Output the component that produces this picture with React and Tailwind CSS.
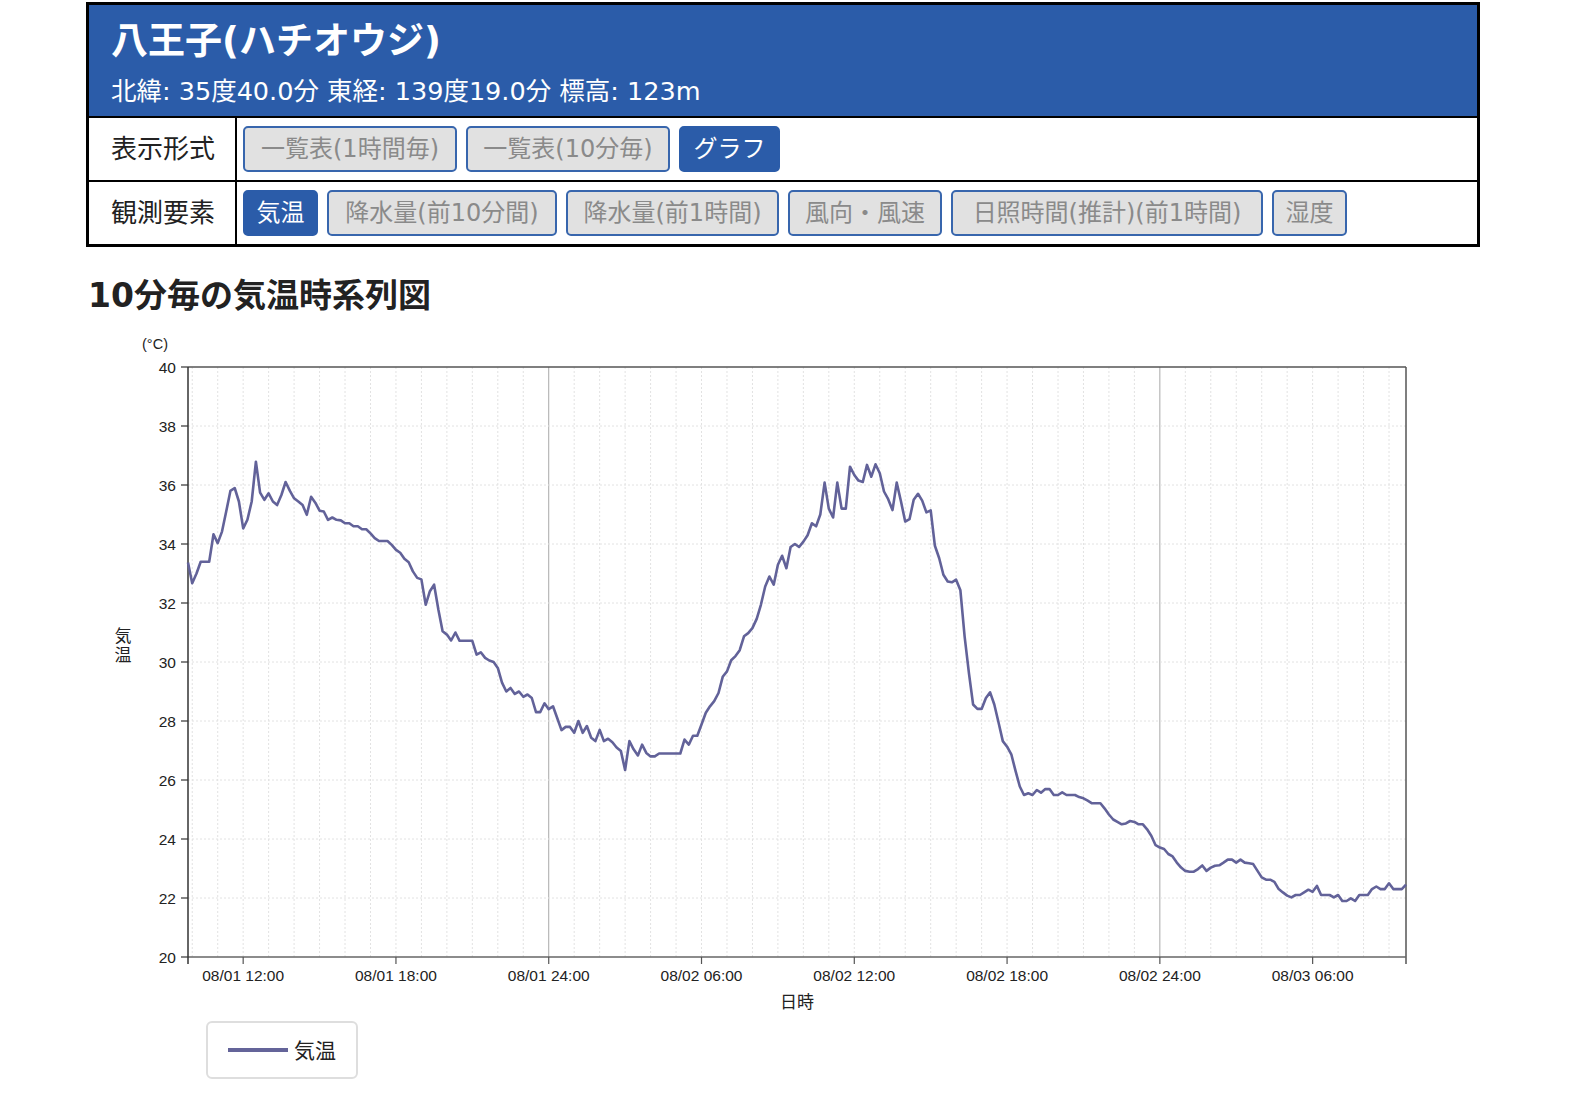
import React from "react";

// 10分毎の気温 (08/01 09:50 〜 08/03 09:40)
const temps = [
  33.37, 32.67, 33.0, 33.4, 33.4, 33.4, 34.33, 34.03, 34.42, 35.1,
  35.8, 35.9, 35.44, 34.53, 34.82, 35.44, 36.79, 35.74, 35.5, 35.72,
  35.44, 35.32, 35.66, 36.1, 35.8, 35.55, 35.44, 35.32, 34.99, 35.6,
  35.4, 35.13, 35.1, 34.82, 34.9, 34.82, 34.8, 34.7, 34.7, 34.6,
  34.6, 34.5, 34.5, 34.36, 34.2, 34.1, 34.1, 34.1, 33.97, 33.8,
  33.7, 33.5, 33.38, 33.07, 32.85, 32.8, 31.94, 32.4, 32.62, 31.77,
  31.04, 30.93, 30.73, 31.0, 30.72, 30.72, 30.72, 30.72, 30.25, 30.33,
  30.14, 30.05, 30.0, 29.8, 29.3, 29.0, 29.12, 28.92, 29.0, 28.82,
  28.9, 28.78, 28.3, 28.3, 28.6, 28.4, 28.5, 28.1, 27.69, 27.8,
  27.8, 27.6, 28.0, 27.6, 27.83, 27.43, 27.32, 27.7, 27.32, 27.4,
  27.28, 27.1, 26.98, 26.34, 27.32, 27.04, 26.83, 27.2, 26.92, 26.8,
  26.8, 26.9, 26.9, 26.9, 26.9, 26.9, 26.9, 27.37, 27.2, 27.5,
  27.5, 27.88, 28.28, 28.5, 28.67, 28.95, 29.5, 29.68, 30.06, 30.2,
  30.4, 30.87, 30.98, 31.15, 31.46, 31.94, 32.56, 32.9, 32.62, 33.3,
  33.6, 33.18, 33.9, 34.0, 33.9, 34.08, 34.3, 34.7, 34.6, 35.0,
  36.08, 35.2, 34.9, 36.08, 35.2, 35.2, 36.62, 36.34, 36.15, 36.1,
  36.68, 36.28, 36.7, 36.4, 35.78, 35.52, 35.15, 36.08, 35.44, 34.76,
  34.84, 35.5, 35.7, 35.47, 35.07, 35.14, 33.94, 33.52, 32.96, 32.73,
  32.7, 32.79, 32.43, 30.87, 29.63, 28.56, 28.41, 28.41, 28.78, 28.97,
  28.56, 27.94, 27.32, 27.13, 26.87, 26.3, 25.78, 25.49, 25.55, 25.49,
  25.66, 25.57, 25.69, 25.69, 25.49, 25.49, 25.58, 25.49, 25.49, 25.49,
  25.42, 25.38, 25.3, 25.21, 25.21, 25.21, 25.03, 24.83, 24.66, 24.58,
  24.5, 24.53, 24.61, 24.58, 24.5, 24.5, 24.33, 24.1, 23.79, 23.71,
  23.66, 23.49, 23.41, 23.2, 23.03, 22.92, 22.89, 22.89, 22.98, 23.1,
  22.92, 23.03, 23.09, 23.11, 23.2, 23.3, 23.3, 23.2, 23.3, 23.2,
  23.18, 23.15, 22.92, 22.7, 22.62, 22.62, 22.55, 22.3, 22.19, 22.08,
  22.02, 22.1, 22.1, 22.19, 22.28, 22.21, 22.41, 22.1, 22.1, 22.1,
  22.02, 22.1, 21.9, 21.9, 21.99, 21.9, 22.1, 22.1, 22.1, 22.3,
  22.39, 22.3, 22.3, 22.5, 22.3, 22.3, 22.3, 22.45,
];

const X0 = 188;
const X1 = 1406;
const YB = 956;
const YT = 366;
const PER_DEG = 29.5;
const STEP = (X1 - X0) / 287;

const tx = (min) => X0 + ((min - 590) / 10) * STEP;
const ty = (t) => YB - (t - 20) * PER_DEG;

const xLabels = [
  [12, "08/01 12:00"],
  [18, "08/01 18:00"],
  [24, "08/01 24:00"],
  [30, "08/02 06:00"],
  [36, "08/02 12:00"],
  [42, "08/02 18:00"],
  [48, "08/02 24:00"],
  [54, "08/03 06:00"],
];

const hours = [];
for (let h = 10; h <= 57; h++) hours.push(h);

const yTicks = [20, 22, 24, 26, 28, 30, 32, 34, 36, 38, 40];

const Btn = ({ active, w, children }) => (
  <div
    className={`${w} h-[46px] flex items-center justify-center rounded-[5px] border-2 text-[24px] leading-none whitespace-nowrap ${
      active
        ? "bg-[#2b5ca9] border-[#2b5ca9] text-white"
        : "bg-[#e1e1e1] border-[#3866ad] text-[#8a8a8a]"
    }`}
  >
    {children}
  </div>
);

const Chart = () => {
  const line = temps
    .map((t, i) => `${(X0 + i * STEP).toFixed(1)},${ty(t).toFixed(1)}`)
    .join(" ");

  return (
    <svg
      width="1440"
      height="685"
      viewBox="0 330 1440 685"
      className="block"
      fontFamily="'Liberation Sans', 'Noto Sans CJK JP', sans-serif"
    >
      {/* grid */}
      {hours.map((h) => (
        <line
          key={h}
          x1={tx(h * 60)}
          x2={tx(h * 60)}
          y1={YT}
          y2={YB}
          stroke={h % 24 === 0 ? "#a8a8a8" : "#e2e2e2"}
          strokeWidth="1"
          strokeDasharray={h % 24 === 0 ? undefined : "2 2"}
        />
      ))}
      {yTicks.slice(1, -1).map((t) => (
        <line
          key={t}
          x1={X0}
          x2={X1}
          y1={ty(t)}
          y2={ty(t)}
          stroke="#e2e2e2"
          strokeWidth="1"
          strokeDasharray="2 2"
        />
      ))}

      {/* frame */}
      <line x1={X0} x2={X1} y1={YT} y2={YT} stroke="#555" strokeWidth="1.5" />
      <line x1={X1} x2={X1} y1={YT} y2={YB + 7} stroke="#555" strokeWidth="1.5" />
      <line x1={X0} x2={X1} y1={YB} y2={YB} stroke="#666" strokeWidth="1.5" />
      <line x1={X0} x2={X0} y1={YT} y2={YB + 7} stroke="#333" strokeWidth="1.5" />

      {/* y axis */}
      {yTicks.map((t) => (
        <g key={t}>
          <line x1={X0 - 7} x2={X0} y1={ty(t)} y2={ty(t)} stroke="#333" strokeWidth="1.2" />
          <text
            x={X0 - 12}
            y={ty(t)}
            textAnchor="end"
            dominantBaseline="central"
            fontSize="15.5"
            fill="#222"
          >
            {t}
          </text>
        </g>
      ))}
      <text x="155" y="343" textAnchor="middle" dominantBaseline="central" fontSize="14.5" fill="#222">
        (°C)
      </text>
      <text x="123" y="635" textAnchor="middle" dominantBaseline="central" fontSize="17" fill="#222">
        気
      </text>
      <text x="123" y="654" textAnchor="middle" dominantBaseline="central" fontSize="17" fill="#222">
        温
      </text>

      {/* x axis */}
      {xLabels.map(([h, label]) => (
        <g key={h}>
          <line
            x1={tx(h * 60)}
            x2={tx(h * 60)}
            y1={YB}
            y2={YB + 7}
            stroke="#555"
            strokeWidth="1.2"
          />
          <text
            x={tx(h * 60)}
            y="974"
            textAnchor="middle"
            dominantBaseline="central"
            fontSize="15.5"
            fill="#222"
          >
            {label}
          </text>
        </g>
      ))}
      <text x="797" y="1001" textAnchor="middle" dominantBaseline="central" fontSize="17" fill="#222">
        日時
      </text>

      <polyline
        points={line}
        fill="none"
        stroke="#626299"
        strokeWidth="2.6"
        strokeLinejoin="round"
      />
    </svg>
  );
};

export default function App() {
  return (
    <div className="bg-white font-['DejaVu_Sans','Noto_Sans_CJK_JP',sans-serif] text-[#222]">
      <div className="ml-[86px] pt-[2px] w-[1394px]">
        <div className="border-[3px] border-black">
          <div className="h-[111px] bg-[#2b5ca9] pl-[22px] text-white">
            <h1 className="pt-[17px] text-[37px] font-bold leading-[40px]">八王子(ハチオウジ)</h1>
            <p className="mt-[13px] text-[25.5px] leading-[32px]">
              北緯: 35度40.0分 東経: 139度19.0分 標高: 123m
            </p>
          </div>
          <div className="flex h-[64px] border-t-2 border-black">
            <div className="flex w-[148px] items-center border-r-2 border-black pl-[22px] text-[26px]">
              表示形式
            </div>
            <div className="flex items-center gap-[9px] pl-[6px]">
              <Btn w="w-[214px]">一覧表(1時間毎)</Btn>
              <Btn w="w-[204px]">一覧表(10分毎)</Btn>
              <Btn w="w-[101px]" active>
                グラフ
              </Btn>
            </div>
          </div>
          <div className="flex h-[64px] border-t-2 border-black">
            <div className="flex w-[148px] items-center border-r-2 border-black pl-[22px] text-[26px]">
              観測要素
            </div>
            <div className="flex items-center gap-[9px] pl-[6px]">
              <Btn w="w-[75px]" active>
                気温
              </Btn>
              <Btn w="w-[230px]">降水量(前10分間)</Btn>
              <Btn w="w-[213px]">降水量(前1時間)</Btn>
              <Btn w="w-[154px]">風向・風速</Btn>
              <Btn w="w-[312px]">日照時間(推計)(前1時間)</Btn>
              <Btn w="w-[75px]">湿度</Btn>
            </div>
          </div>
        </div>
      </div>

      <h2 className="ml-[88px] pt-[29px] pb-[15px] text-[33px] font-bold leading-[40px]">
        10分毎の気温時系列図
      </h2>

      <Chart />

      <div className="ml-[206px] mt-[5px] flex h-[58px] w-[152px] items-center rounded-[6px] border-2 border-[#dedede] pl-[20px]">
        <span className="block h-[4px] w-[60px] bg-[#646499]" />
        <span className="ml-[6px] font-['Noto_Sans_CJK_JP',sans-serif] text-[21px]">気温</span>
      </div>
    </div>
  );
}
